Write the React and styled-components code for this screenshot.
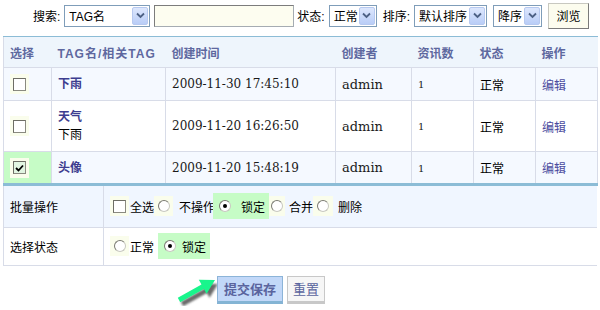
import React from "react";
import styled, { createGlobalStyle } from "styled-components";

const Global = createGlobalStyle`
  html, body { margin: 0; padding: 0; background: #fff; }
  body {
    font-family: "Liberation Sans", "Noto Sans CJK SC", sans-serif;
    font-size: 12px;
    color: #000;
  }
`;

const Page = styled.div`
  width: 600px;
  height: 310px;
  overflow: hidden;
  padding: 0 3px;
  box-sizing: border-box;
`;

const Toolbar = styled.div`
  display: flex;
  align-items: center;
  height: 31px;
  margin-bottom: 5px;
  padding-left: 30px;
`;

const Label = styled.span`
  font-size: 12px;
  margin-right: ${(p) => p.$mr || 4}px;
  margin-left: ${(p) => p.$ml || 0}px;
  white-space: nowrap;
`;

const SelectBox = styled.div`
  display: inline-flex;
  align-items: center;
  justify-content: space-between;
  width: ${(p) => p.$w}px;
  height: 22px;
  border: 1px solid #7f9db9;
  background: #fff;
  padding: 0 1px 0 4px;
  box-sizing: border-box;
  font-size: 12px;
  margin-left: ${(p) => p.$ml || 0}px;
  white-space: nowrap;
`;

const SelArrow = styled.span`
  width: 16px;
  height: 18px;
  flex: none;
  box-sizing: border-box;
  background: linear-gradient(#dde7fd, #b9cdf7);
  border: 1px solid #b7c9f0;
  border-radius: 2px;
  display: flex;
  align-items: center;
  justify-content: center;
`;

const TextInput = styled.div`
  width: 140px;
  height: 22px;
  box-sizing: border-box;
  margin: 0 3px 0 4px;
  background: #fdfdf0;
  border: 1px solid #a5acb2;
  border-top-color: #7c7c7c;
  border-left-color: #7c7c7c;
`;

const BrowseBtn = styled.div`
  width: 41px;
  height: 26px;
  box-sizing: border-box;
  margin-left: 6px;
  background: #fcfcee;
  border: 1px solid #c8c8c0;
  border-right-color: #7a7a7a;
  border-bottom-color: #7a7a7a;
  display: flex;
  align-items: center;
  justify-content: center;
  font-size: 12px;
`;

const Table = styled.table`
  width: 594px;
  table-layout: fixed;
  border-collapse: collapse;
  border-top: 1px solid #8cbcd6;
  border-bottom: 3px solid #8cbcd6;
  border-left: 1px solid #d8dce8;
`;

const Th = styled.th`
  height: 30px;
  padding: 0 6px;
  text-align: left;
  font-size: 12px;
  font-weight: bold;
  color: #5e689f;
  background: #eef5fc;
  border-bottom: 1px solid #d8dce8;
  white-space: nowrap;
  letter-spacing: ${(p) => (p.$ls ? "1px" : "0")};
`;

const Tr = styled.tr`
  background: ${(p) => (p.$alt ? "#ffffff" : "#f5f9ff")};
`;

const Td = styled.td`
  height: ${(p) => p.$h}px;
  padding: 0 6px;
  border: 1px solid #d8dce8;
  border-top: none;
  vertical-align: middle;
  font-size: 12px;
  background: ${(p) => (p.$green ? "#c6fcc6" : "transparent")};
`;

const SerifText = styled.span`
  font-family: "DejaVu Serif", "Liberation Serif", serif;
  font-size: ${(p) => p.$size || 12}px;
  color: #1a1a1a;
`;

const TagName = styled.div`
  font-weight: bold;
  color: #3d3d8f;
  line-height: 18px;
`;

const SubTag = styled.div`
  color: #000;
  line-height: 18px;
`;

const EditLink = styled.span`
  color: #4c4c9e;
`;

const CtrlBg = styled.span`
  display: inline-flex;
  align-items: center;
  justify-content: center;
  width: ${(p) => p.$w || 19}px;
  height: 20px;
  background: ${(p) => (p.$green ? "transparent" : "#fafdec")};
  flex: none;
`;

const Box = styled.span`
  width: 13px;
  height: 13px;
  box-sizing: border-box;
  border: 1px solid #8a8a80;
  border-top-color: #6e6e66;
  border-left-color: #6e6e66;
  background: ${(p) => (p.$checked ? "#e2f5e2" : "#fff")};
  display: flex;
  align-items: center;
  justify-content: center;
`;

const Circle = styled.span`
  width: 12px;
  height: 12px;
  box-sizing: border-box;
  border-radius: 50%;
  border: 1px solid #c8c8c0;
  border-top-color: #7a7a72;
  border-left-color: #7a7a72;
  background: #fff;
  display: flex;
  align-items: center;
  justify-content: center;
  &::after {
    content: "";
    display: ${(p) => (p.$on ? "block" : "none")};
    width: 4px;
    height: 4px;
    border-radius: 50%;
    background: #000;
  }
`;

const BatchTable = styled.table`
  width: 594px;
  table-layout: fixed;
  border-collapse: collapse;
  border-left: 1px solid #d8dce8;
`;

const BatchRow = styled.tr`
  background: ${(p) => (p.$alt ? "#ffffff" : "#f0f6ff")};
`;

const BatchLabel = styled.td`
  width: 100px;
  height: ${(p) => p.$h}px;
  padding: 0 0 0 6px;
  border-right: 1px solid #d8dce8;
  border-bottom: 1px solid #d8dce8;
  box-sizing: border-box;
  font-size: 12px;
  vertical-align: middle;
`;

const BatchCell = styled.td`
  padding: 0 0 0 6px;
  border-bottom: 1px solid #d8dce8;
  vertical-align: middle;
`;

const Options = styled.div`
  display: flex;
  align-items: center;
`;

const Option = styled.span`
  display: inline-flex;
  align-items: center;
  height: 26px;
  padding: ${(p) => (p.$green ? "0 4px 0 1px" : "0")};
  background: ${(p) => (p.$green ? "#c6fcc6" : "transparent")};
  margin-right: ${(p) => p.$mr || 0}px;
  margin-left: ${(p) => p.$ml || 0}px;
  font-size: 12px;
  white-space: nowrap;
`;

const OptText = styled.span`
  margin-left: ${(p) => p.$ml || 1}px;
`;

const ButtonRow = styled.div`
  display: flex;
  align-items: flex-start;
  margin-top: 10px;
  padding-left: 166px;
`;

const ArrowWrap = styled.div`
  width: 48px;
  height: 30px;
`;

const SubmitBtn = styled.div`
  width: 66px;
  height: 28px;
  box-sizing: border-box;
  background: #c2d8f8;
  border: 1px solid #8cb4d8;
  border-bottom: 3px solid #84b4d4;
  display: flex;
  align-items: center;
  justify-content: center;
  font-weight: bold;
  font-size: 13px;
  color: #5a649e;
`;

const ResetBtn = styled.div`
  width: 38px;
  height: 28px;
  box-sizing: border-box;
  margin-left: 4px;
  background: #f6f6f6;
  border: 1px solid #c8c8c8;
  border-bottom: 3px solid #c8c8c8;
  display: flex;
  align-items: center;
  justify-content: center;
  font-size: 13px;
  color: #5a649e;
`;

const Chevron = () => (
  <svg width="9" height="7" viewBox="0 0 9 7">
    <path d="M1 1.5 L4.5 5 L8 1.5" fill="none" stroke="#4d6185" strokeWidth="1.8" />
  </svg>
);

const Select = ({ w, ml, children }) => (
  <SelectBox $w={w} $ml={ml}>
    <span>{children}</span>
    <SelArrow>
      <Chevron />
    </SelArrow>
  </SelectBox>
);

const CheckMark = () => (
  <svg width="9" height="8" viewBox="0 0 9 8">
    <path d="M1 4 L3.5 6.5 L8 1.5" fill="none" stroke="#000" strokeWidth="1.8" />
  </svg>
);

const Checkbox = ({ checked, green }) => (
  <CtrlBg $green={green}>
    <Box $checked={checked}>{checked && <CheckMark />}</Box>
  </CtrlBg>
);

const Radio = ({ on, green, w }) => (
  <CtrlBg $green={green} $w={w}>
    <Circle $on={on} />
  </CtrlBg>
);

const Arrow = () => (
  <svg width="48" height="30" viewBox="0 0 48 30">
    <defs>
      <filter id="blur" x="-20%" y="-20%" width="140%" height="140%">
        <feGaussianBlur stdDeviation="1.3" />
      </filter>
    </defs>
    <g transform="translate(6 0)">
      <polygon
        transform="translate(3 4)"
        points="2.8,21.8 26.5,8.6 23.8,3.8 40,4 31.6,17.8 28.9,13 5.2,26.2"
        fill="#6a6a6a"
        filter="url(#blur)"
      />
      <polygon
        points="2.8,21.8 26.5,8.6 23.8,3.8 40,4 31.6,17.8 28.9,13 5.2,26.2"
        fill="#19f58c"
      />
    </g>
  </svg>
);

const rows = [
  { name: "下雨", sub: null, date: "2009-11-30 17:45:10", h: 32, checked: false },
  { name: "天气", sub: "下雨", date: "2009-11-20 16:26:50", h: 50, checked: false },
  { name: "头像", sub: null, date: "2009-11-20 15:48:19", h: 31, checked: true },
];

export default function App() {
  return (
    <>
      <Global />
      <Page>
        <Toolbar>
          <Label>搜索:</Label>
          <Select w={86}>TAG名</Select>
          <TextInput />
          <Label>状态:</Label>
          <Select w={48}>正常</Select>
          <Label $ml={6}>排序:</Label>
          <Select w={73}>默认排序</Select>
          <Select w={49} ml={6}>降序</Select>
          <BrowseBtn>浏览</BrowseBtn>
        </Toolbar>

        <Table>
          <colgroup>
            <col style={{ width: 48 }} />
            <col style={{ width: 114 }} />
            <col style={{ width: 170 }} />
            <col style={{ width: 76 }} />
            <col style={{ width: 62 }} />
            <col style={{ width: 62 }} />
            <col style={{ width: 62 }} />
          </colgroup>
          <thead>
            <tr>
              <Th>选择</Th>
              <Th $ls>TAG名/相关TAG</Th>
              <Th>创建时间</Th>
              <Th>创建者</Th>
              <Th>资讯数</Th>
              <Th>状态</Th>
              <Th>操作</Th>
            </tr>
          </thead>
          <tbody>
            {rows.map((r, i) => (
              <Tr key={i} $alt={i === 1}>
                <Td $h={r.h} $green={r.checked}>
                  <Checkbox checked={r.checked} />
                </Td>
                <Td $h={r.h}>
                  <TagName>{r.name}</TagName>
                  {r.sub && <SubTag>{r.sub}</SubTag>}
                </Td>
                <Td $h={r.h}>
                  <SerifText>{r.date}</SerifText>
                </Td>
                <Td $h={r.h}>
                  <SerifText $size={13}>admin</SerifText>
                </Td>
                <Td $h={r.h}>
                  <SerifText $size={10}>1</SerifText>
                </Td>
                <Td $h={r.h}>正常</Td>
                <Td $h={r.h}>
                  <EditLink>编辑</EditLink>
                </Td>
              </Tr>
            ))}
          </tbody>
        </Table>

        <BatchTable>
          <tbody>
            <BatchRow>
              <BatchLabel $h={41}>批量操作</BatchLabel>
              <BatchCell>
                <Options>
                  <Option>
                    <Checkbox />
                    <OptText>全选</OptText>
                  </Option>
                  <Option>
                    <Radio />
                    <OptText $ml={6}>不操作</OptText>
                  </Option>
                  <Option $green $ml={-2}>
                    <Radio green on w={22} />
                    <OptText $ml={5}>锁定</OptText>
                  </Option>
                  <Option>
                    <Radio w={16} />
                    <OptText $ml={4}>合并</OptText>
                  </Option>
                  <Option>
                    <Radio w={20} />
                    <OptText $ml={5}>删除</OptText>
                  </Option>
                </Options>
              </BatchCell>
            </BatchRow>
            <BatchRow $alt>
              <BatchLabel $h={38}>选择状态</BatchLabel>
              <BatchCell>
                <Options>
                  <Option $mr={4}>
                    <Radio />
                    <OptText>正常</OptText>
                  </Option>
                  <Option $green>
                    <Radio green on w={22} />
                    <OptText $ml={0}>锁定</OptText>
                  </Option>
                </Options>
              </BatchCell>
            </BatchRow>
          </tbody>
        </BatchTable>

        <ButtonRow>
          <ArrowWrap>
            <Arrow />
          </ArrowWrap>
          <SubmitBtn>提交保存</SubmitBtn>
          <ResetBtn>重置</ResetBtn>
        </ButtonRow>
      </Page>
    </>
  );
}
